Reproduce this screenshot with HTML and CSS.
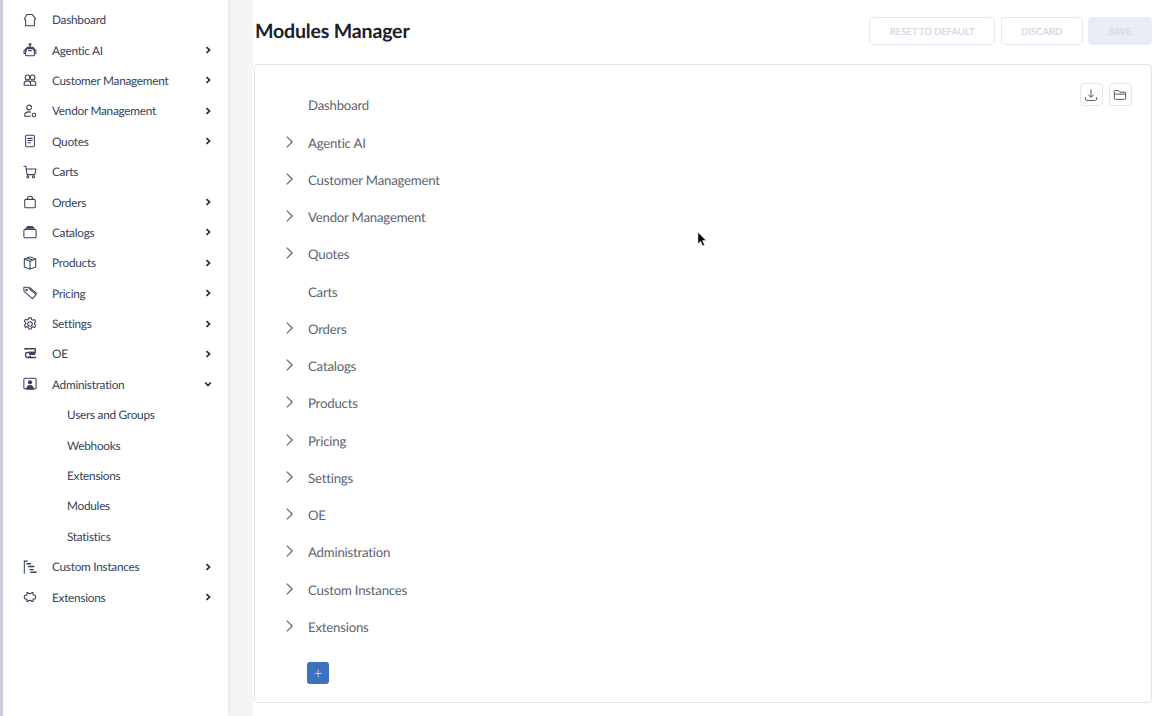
FILE: index.html
```html
<!DOCTYPE html>
<html lang="en">
<head>
<meta charset="utf-8">
<title>Modules Manager</title>
<link rel="stylesheet" href="styles.css">
</head>
<body>
<div class="app">
  <div class="rail"></div>
  <nav class="sidebar">
    <a class="nav-item"><svg class="ico" viewBox="0 0 16 16"><path d="M4.500 1.800h6l4 5-1.500 1.200v6.500H3V8L1.500 6.800z"/></svg><span class="label">Dashboard</span></a>
    <a class="nav-item"><svg class="ico" viewBox="0 0 16 16"><circle cx="8" cy="1.800" r="1.100"/><path d="M8 3v1.500M3 7.500C3 5.500 5 4.500 8 4.500s5 1 5 3v5.500c0 1-.8 1.500-1.500 1.500h-7C3.800 14.500 3 14 3 13zM3 8H1.200v4H3M13 8h1.800v4H13"/><path class="fill" d="M3 7.500C3 5.500 5 4.500 8 4.500s5 1 5 3v2H3z"/><rect class="hole" x="4.200" y="7" width="7.600" height="3.400" rx="1.500"/><rect class="fill" x="5.800" y="8" width="4.400" height="1.400" rx=".7"/></svg><span class="label">Agentic AI</span><svg class="car" viewBox="0 0 8 8"><path d="M2.500 1.200 5.500 4l-3 2.800"/></svg></a>
    <a class="nav-item"><svg class="ico" viewBox="0 0 16 16"><circle cx="5.200" cy="5" r="2.700"/><circle cx="11" cy="5" r="2.700"/><path d="M1.300 14v-1.500c0-2 1.700-3.500 3.700-3.500s3.700 1.500 3.700 3.500V14zM8.500 9.300c.8-.3 1.500-.4 2.500-.3 2 0 3.700 1.500 3.700 3.500V14H8.700"/></svg><span class="label">Customer Management</span><svg class="car" viewBox="0 0 8 8"><path d="M2.500 1.200 5.500 4l-3 2.800"/></svg></a>
    <a class="nav-item"><svg class="ico" viewBox="0 0 16 16"><circle cx="7" cy="4" r="2.700"/><path d="M2 14v-1.500C2 10.500 4 9 7 9c.8 0 1.500.1 2 .3M2 14h6.500"/><circle cx="12.500" cy="12.500" r="2"/></svg><span class="label">Vendor Management</span><svg class="car" viewBox="0 0 8 8"><path d="M2.500 1.200 5.500 4l-3 2.800"/></svg></a>
    <a class="nav-item"><svg class="ico" viewBox="0 0 16 16"><rect x="3" y="1.500" width="10" height="13" rx="1.300"/><path d="M5.500 5h5M5.500 7.500h5M5.500 10h3"/></svg><span class="label">Quotes</span><svg class="car" viewBox="0 0 8 8"><path d="M2.500 1.200 5.500 4l-3 2.800"/></svg></a>
    <a class="nav-item"><svg class="ico" viewBox="0 0 16 16"><path d="M1 1.500h2.200l1.500 9.500h8.800l1.300-6.500H3.600"/><circle cx="5.500" cy="13.500" r="1.200"/><circle cx="12" cy="13.500" r="1.200"/></svg><span class="label">Carts</span></a>
    <a class="nav-item"><svg class="ico" viewBox="0 0 16 16"><rect x="2" y="5" width="12" height="9.500" rx="1.200"/><path d="M5.200 5V3.500C5.200 2.200 6.200 1.500 8 1.500s2.800.7 2.800 2V5"/></svg><span class="label">Orders</span><svg class="car" viewBox="0 0 8 8"><path d="M2.500 1.200 5.500 4l-3 2.800"/></svg></a>
    <a class="nav-item"><svg class="ico" viewBox="0 0 16 16"><rect x="1" y="5" width="14" height="9.500" rx="1.500"/><path class="thick" d="M3.500 3.500h9M5 1.800h6"/></svg><span class="label">Catalogs</span><svg class="car" viewBox="0 0 8 8"><path d="M2.500 1.200 5.500 4l-3 2.800"/></svg></a>
    <a class="nav-item"><svg class="ico" viewBox="0 0 16 16"><path d="M8 1 14.500 3.500v9L8 15l-6.500-2.500v-9zM1.500 3.500 8 6l6.500-2.500M8 6v9M4.800 2.300l6.400 2.500"/></svg><span class="label">Products</span><svg class="car" viewBox="0 0 8 8"><path d="M2.500 1.200 5.500 4l-3 2.800"/></svg></a>
    <a class="nav-item"><svg class="ico" viewBox="0 0 16 16"><path d="M1 5V1.500h4.500l9.500 8.300-4.200 4.700L1.500 6.500z"/><path d="M7.500 1.500l8 7"/><circle cx="4" cy="4.500" r=".8"/></svg><span class="label">Pricing</span><svg class="car" viewBox="0 0 8 8"><path d="M2.500 1.200 5.500 4l-3 2.800"/></svg></a>
    <a class="nav-item"><svg class="ico" viewBox="0 0 16 16"><circle cx="8" cy="8" r="2.600"/><path d="M6.600 1h2.800l.4 1.900 1.400.7 1.900-.7 1.400 2.300-1.400 1.400v1.600l1.400 1.400-1.400 2.300-1.900-.7-1.400.7-.4 1.900H6.600l-.4-1.900-1.400-.7-1.900.7-1.400-2.300 1.400-1.400V6.200L1.500 4.900l1.400-2.300 1.900.7 1.400-.7z"/></svg><span class="label">Settings</span><svg class="car" viewBox="0 0 8 8"><path d="M2.500 1.200 5.500 4l-3 2.800"/></svg></a>
    <a class="nav-item"><svg class="ico" viewBox="0 0 16 16"><path class="thick" d="M2.500 2h11.500v4.200H5c-1.300 0-2 .7-2 1.800v2c0 1.300.7 2 2 2h9.500"/><path class="fill" d="M7 5.500h7V9H7zM6 11l3-1.500V13z"/><circle class="fill" cx="2.500" cy="2" r="1"/></svg><span class="label">OE</span><svg class="car" viewBox="0 0 8 8"><path d="M2.500 1.200 5.500 4l-3 2.800"/></svg></a>
    <a class="nav-item"><svg class="ico" viewBox="0 0 16 16"><rect x="1" y="1.500" width="14" height="12" rx="1.200"/><circle class="fill" cx="8" cy="6" r="2.400"/><path class="fill" d="M3.500 14.500c0-3.500 2-5.500 4.500-5.500s4.500 2 4.500 5.500z"/></svg><span class="label">Administration</span><svg class="car" viewBox="0 0 8 8"><path d="M1.200 2.500 4 5.500l2.800-3"/></svg></a>
    <a class="nav-sub">Users and Groups</a>
    <a class="nav-sub">Webhooks</a>
    <a class="nav-sub">Extensions</a>
    <a class="nav-sub">Modules</a>
    <a class="nav-sub">Statistics</a>
    <a class="nav-item"><svg class="ico" viewBox="0 0 16 16"><path d="M1.500 1v14M1.500 1.300h3.500"/><path class="thick" d="M4.500 4.200h4M6.500 7.500h6M8 11h3.500M9 14h6"/></svg><span class="label">Custom Instances</span><svg class="car" viewBox="0 0 8 8"><path d="M2.500 1.200 5.500 4l-3 2.800"/></svg></a>
    <a class="nav-item"><svg class="ico" viewBox="0 0 16 16"><path d="M4.500 3H6c.3 1.500 3.700 1.500 4 0h1.500v2.800H13c.8 0 1.500.5 1.500 1.200v2c0 .7-.7 1.200-1.500 1.200h-1.500V13H10c-.3-1.500-3.700-1.500-4 0H4.500v-2.800H3c-.8 0-1.500-.5-1.500-1.200V7c0-.7.700-1.200 1.500-1.200h1.500z"/></svg><span class="label">Extensions</span><svg class="car" viewBox="0 0 8 8"><path d="M2.500 1.200 5.500 4l-3 2.800"/></svg></a>
  </nav>
  <div class="gutter"></div>
  <main class="main">
    <header class="head">
      <h1 class="title">Modules Manager</h1>
      <div class="actions">
        <button class="btn btn-reset">RESET TO DEFAULT</button>
        <button class="btn btn-discard">DISCARD</button>
        <button class="btn btn-save">SAVE</button>
      </div>
    </header>
    <section class="card">
      <div class="tools">
        <button class="tool"><svg class="tool-ico" viewBox="0 0 16 16"><path d="M8 1.500v9M4.800 7.500 8 10.800l3.200-3.300M1.500 10.500v2.200c0 .9.600 1.500 1.500 1.500h10c.9 0 1.500-.6 1.500-1.500v-2.200"/></svg></button>
        <button class="tool"><svg class="tool-ico" viewBox="0 0 16 16"><path d="M2.500 3h3.700l1.500 1.800h5.800c.6 0 1 .4 1 1v6.200c0 .6-.4 1-1 1h-11c-.6 0-1-.4-1-1V4c0-.6.400-1 1-1zM1.500 7h13"/></svg></button>
      </div>
      <ul class="tree">
        <li class="row"><span class="twist"></span>Dashboard</li>
        <li class="row"><svg class="twist" viewBox="0 0 10 14"><path d="M2 1 8 7l-6 6"/></svg>Agentic AI</li>
        <li class="row"><svg class="twist" viewBox="0 0 10 14"><path d="M2 1 8 7l-6 6"/></svg>Customer Management</li>
        <li class="row"><svg class="twist" viewBox="0 0 10 14"><path d="M2 1 8 7l-6 6"/></svg>Vendor Management</li>
        <li class="row"><svg class="twist" viewBox="0 0 10 14"><path d="M2 1 8 7l-6 6"/></svg>Quotes</li>
        <li class="row"><span class="twist"></span>Carts</li>
        <li class="row"><svg class="twist" viewBox="0 0 10 14"><path d="M2 1 8 7l-6 6"/></svg>Orders</li>
        <li class="row"><svg class="twist" viewBox="0 0 10 14"><path d="M2 1 8 7l-6 6"/></svg>Catalogs</li>
        <li class="row"><svg class="twist" viewBox="0 0 10 14"><path d="M2 1 8 7l-6 6"/></svg>Products</li>
        <li class="row"><svg class="twist" viewBox="0 0 10 14"><path d="M2 1 8 7l-6 6"/></svg>Pricing</li>
        <li class="row"><svg class="twist" viewBox="0 0 10 14"><path d="M2 1 8 7l-6 6"/></svg>Settings</li>
        <li class="row"><svg class="twist" viewBox="0 0 10 14"><path d="M2 1 8 7l-6 6"/></svg>OE</li>
        <li class="row"><svg class="twist" viewBox="0 0 10 14"><path d="M2 1 8 7l-6 6"/></svg>Administration</li>
        <li class="row"><svg class="twist" viewBox="0 0 10 14"><path d="M2 1 8 7l-6 6"/></svg>Custom Instances</li>
        <li class="row"><svg class="twist" viewBox="0 0 10 14"><path d="M2 1 8 7l-6 6"/></svg>Extensions</li>
      </ul>
      <button class="add">+</button>
    </section>
  </main>
</div>
<svg class="cursor" viewBox="0 0 12 18"><path d="M1 1v13l3-3 2.200 5 2-1-2.200-4.800h4z"/></svg>
</body>
</html>
```
FILE: styles.css
```css
* { box-sizing: border-box; }
html, body { margin: 0; height: 100%; }
body { font-family: Lato, "Liberation Sans", sans-serif; color: #2f3b4d; background: #fff; overflow: hidden; text-rendering: geometricPrecision; }
.app { display: flex; height: 716px; width: 1168px; }
.rail { width: 3px; background: #c9d0da; flex: none; }
.sidebar { position: relative; width: 225px; flex: none; background: #fff; padding-top: 4.500px; display: flex; flex-direction: column; box-shadow: 1px 0 4px rgba(0, 0, 0, .08); }
.gutter { width: 25px; flex: none; background: #f5f5f6; }
.nav-item { height: 30.400px; flex: none; display: flex; align-items: center; padding-left: 20px; font-size: 11.800px; letter-spacing: -.26px; color: #36435a; }
.nav-sub { height: 30.400px; flex: none; display: flex; align-items: center; padding-left: 64px; font-size: 11.800px; letter-spacing: -.26px; color: #36435a; }
.ico { width: 14px; height: 14px; flex: none; overflow: visible; fill: none; stroke: #36435a; stroke-width: 1.200; stroke-linejoin: round; stroke-linecap: round; }
.ico .fill { fill: #36435a; stroke: none; }
.ico .hole { fill: #fff; stroke: none; }
.ico .thick { stroke-width: 1.600; }
.label { margin-left: 15px; flex: 1; }
.car { width: 8px; height: 8px; flex: none; margin-right: 16px; fill: none; stroke: #1f2a3c; stroke-width: 1.700; }
.main { flex: 1; background: #fff; display: flex; flex-direction: column; min-width: 0; }
.head { height: 64px; flex: none; padding: 17px 16px 0 2px; display: flex; justify-content: space-between; align-items: flex-start; }
.title { margin: 0; padding-top: .5px; font-size: 19.600px; letter-spacing: -.2px; line-height: 28px; font-weight: 700; color: #1b2029; }
.actions { display: flex; gap: 5.500px; }
.btn { height: 28px; border-radius: 4px; font-family: inherit; font-size: 9.800px; letter-spacing: -.25px; font-weight: 700; color: #d3dbe8; background: #fff; border: 1px solid #e6e9ef; padding: 1px 0 0; text-rendering: geometricPrecision; }
.btn-reset { width: 126px; }
.btn-discard { width: 82px; }
.btn-save { width: 64px; background: #e8ecf4; border-color: #e8ecf4; }
.card { position: relative; background: #fff; height: 639px; margin-left: 1px; margin-right: 16px; border: 1px solid #e2e4e8; border-radius: 4px; flex: none; }
.tools { position: absolute; top: 18px; right: 19.500px; display: flex; gap: 6px; }
.tool { width: 23px; height: 23px; padding: 0; border: 1px solid #e4e6ea; border-radius: 4px; background: #fff; display: flex; align-items: center; justify-content: center; }
.tool-ico { width: 14px; height: 14px; fill: none; stroke: #4a5362; stroke-width: 1.100; }
.tree { list-style: none; margin: 0; padding: 21.800px 0 0 30px; }
.row { height: 37.250px; display: flex; align-items: center; font-size: 13.200px; letter-spacing: -.2px; color: #5d6470; }
.twist { width: 9px; height: 14px; flex: none; margin-right: 14px; fill: none; stroke: #5d6470; stroke-width: 1.300; position: relative; top: -1px; }
.add { display: block; margin: 16.400px 0 0 52px; width: 22px; height: 22px; border: none; padding: 0; background: #3a72bb; color: #fff; border-radius: 3px; font-family: inherit; font-size: 15px; font-weight: 300; line-height: 22px; }
.cursor { position: absolute; left: 697px; top: 231px; width: 11px; height: 17px; fill: #000; stroke: #fff; stroke-width: .6; }
```
